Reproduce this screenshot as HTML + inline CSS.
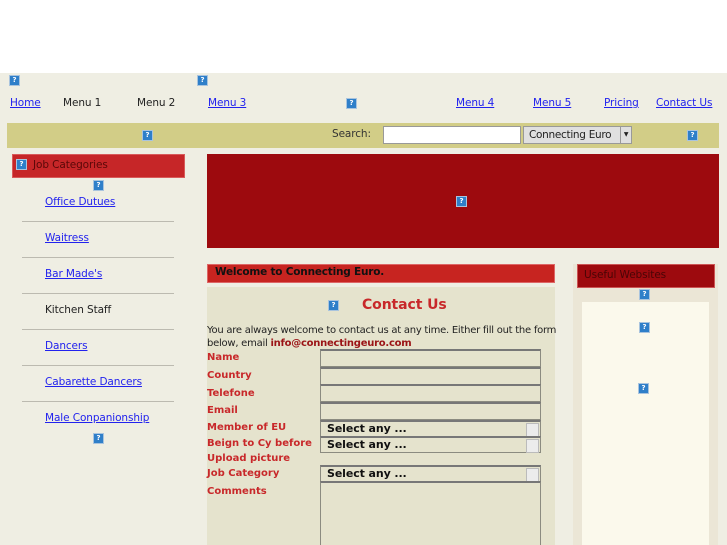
<!DOCTYPE html>
<html style="overflow:hidden"><head><meta charset="utf-8"><style>
*{margin:0;padding:0;box-sizing:border-box}
html,body{width:727px;height:545px;overflow:hidden}
body{background:#efeee3;font-family:"DejaVu Sans","Liberation Sans",sans-serif;font-size:10.5px;color:#222;position:relative;letter-spacing:-0.1px}
.a{position:absolute}
.ic{position:absolute;width:11px;height:11px;background:#2f7fc9;border:1px solid #a9c4de;color:#fff;font-size:7px;line-height:9px;text-align:center;font-weight:bold}
a{color:#2222ee;text-decoration:underline}
.lbl{position:absolute;left:207px;color:#c8282a;font-weight:bold;font-size:10px;letter-spacing:0}
.inp{position:absolute;left:320px;width:221px;background:#e5e3cd;border:1px solid #8b8b80;border-top:2px solid #777}
.sel{font-weight:bold;font-size:11px;padding-left:6px;line-height:14px;color:#111}
.sel:after{content:"";position:absolute;right:1px;top:1px;width:11px;height:12px;background:#ececec;border:1px solid #bbb}
.hr{position:absolute;left:22px;width:152px;height:1px;background:#bcbab0}
</style></head><body>
<div class="a" style="left:0;top:0;width:727px;height:73px;background:#fff"></div>
<div class="ic" style="left:9px;top:75px">?</div>
<div class="ic" style="left:197px;top:75px">?</div>
<div class="a" style="top:97px;left:10px"><a>Home</a></div>
<div class="a" style="top:97px;left:63px">Menu 1</div>
<div class="a" style="top:97px;left:137px">Menu 2</div>
<div class="a" style="top:97px;left:208px"><a>Menu 3</a></div>
<div class="ic" style="left:346px;top:98px">?</div>
<div class="a" style="top:97px;left:456px"><a>Menu 4</a></div>
<div class="a" style="top:97px;left:533px"><a>Menu 5</a></div>
<div class="a" style="top:97px;left:604px"><a>Pricing</a></div>
<div class="a" style="top:97px;left:656px"><a>Contact Us</a></div>
<div class="a" style="left:7px;top:123px;width:712px;height:25px;background:#d2cd87"></div>
<div class="ic" style="left:142px;top:130px">?</div>
<div class="a" style="left:332px;top:128px;color:#333">Search:</div>
<div class="a" style="left:383px;top:126px;width:138px;height:18px;background:#fff;border:1px solid #999"></div>
<div class="a" style="left:523px;top:126px;width:109px;height:18px;background:#e0e0e0;border:1px solid #999;padding-left:5px;line-height:16px;color:#222;font-size:10.5px;letter-spacing:-0.3px">Connecting Euro<span style="position:absolute;right:0;top:0;width:11px;height:16px;border-left:1px solid #999;font-size:6px;text-align:center;background:#e0e0e0">▼</span></div>
<div class="ic" style="left:687px;top:130px">?</div>

<div class="a" style="left:12px;top:154px;width:173px;height:24px;background:#c62628;border:1px solid #d85a5a"></div>
<div class="ic" style="left:16px;top:159px">?</div>
<div class="a" style="left:33px;top:159px;color:#5a0808">Job Categories</div>
<div class="ic" style="left:93px;top:180px">?</div>
<div class="a" style="left:45px;top:196px"><a>Office Dutues</a></div>
<div class="hr" style="top:221px"></div>
<div class="a" style="left:45px;top:232px"><a>Waitress</a></div>
<div class="hr" style="top:257px"></div>
<div class="a" style="left:45px;top:268px"><a>Bar Made's</a></div>
<div class="hr" style="top:293px"></div>
<div class="a" style="left:45px;top:304px">Kitchen Staff</div>
<div class="hr" style="top:329px"></div>
<div class="a" style="left:45px;top:340px"><a>Dancers</a></div>
<div class="hr" style="top:365px"></div>
<div class="a" style="left:45px;top:376px"><a>Cabarette Dancers</a></div>
<div class="hr" style="top:401px"></div>
<div class="a" style="left:45px;top:412px"><a>Male Conpanionship</a></div>
<div class="ic" style="left:93px;top:433px">?</div>

<div class="a" style="left:207px;top:154px;width:512px;height:94px;background:#9d0a0e"></div>
<div class="ic" style="left:456px;top:196px">?</div>

<div class="a" style="left:207px;top:264px;width:348px;height:19px;background:#c72420;border:1px solid #d66"></div>
<div class="a" style="left:215px;top:266px;font-weight:bold;color:#111;font-size:10.5px;letter-spacing:-0.2px">Welcome to Connecting Euro.</div>
<div class="a" style="left:207px;top:287px;width:348px;height:258px;background:#e5e3cd"></div>
<div class="ic" style="left:328px;top:300px">?</div>
<div class="a" style="left:362px;top:297px;color:#c8282a;font-weight:bold;font-size:14px">Contact Us</div>
<div class="a" style="left:207px;top:325px;font-size:10px;line-height:12.5px;color:#222;width:352px;letter-spacing:-0.25px">You are always welcome to contact us at any time. Either fill out the form below, email <b style="color:#9b1416">info@connectingeuro.com</b></div>
<div class="lbl" style="top:352px">Name</div>
<div class="lbl" style="top:370px">Country</div>
<div class="lbl" style="top:388px">Telefone</div>
<div class="lbl" style="top:405px">Email</div>
<div class="lbl" style="top:422px">Member of EU</div>
<div class="lbl" style="top:438px">Beign to Cy before</div>
<div class="lbl" style="top:453px">Upload picture</div>
<div class="lbl" style="top:468px">Job Category</div>
<div class="lbl" style="top:486px">Comments</div>
<div class="inp" style="top:349px;height:18px"></div>
<div class="inp" style="top:367px;height:18px"></div>
<div class="inp" style="top:384px;height:18px"></div>
<div class="inp" style="top:402px;height:18px"></div>
<div class="inp sel" style="top:420px;height:17px">Select any ...</div>
<div class="inp sel" style="top:436px;height:17px">Select any ...</div>
<div class="inp sel" style="top:465px;height:17px">Select any ...</div>
<div class="inp" style="top:481px;height:64px;border-bottom:none"></div>

<div class="a" style="left:573px;top:264px;width:145px;height:281px;background:#ebe6d6"></div>
<div class="a" style="left:577px;top:264px;width:138px;height:24px;background:#9d0a0e;border:1px solid #c55"></div>
<div class="a" style="left:584px;top:269px;color:#4a0506">Useful Websites</div>
<div class="ic" style="left:639px;top:289px">?</div>
<div class="a" style="left:582px;top:302px;width:127px;height:243px;background:#fbf9ec"></div>
<div class="ic" style="left:639px;top:322px">?</div>
<div class="ic" style="left:638px;top:383px">?</div>
</body></html>
